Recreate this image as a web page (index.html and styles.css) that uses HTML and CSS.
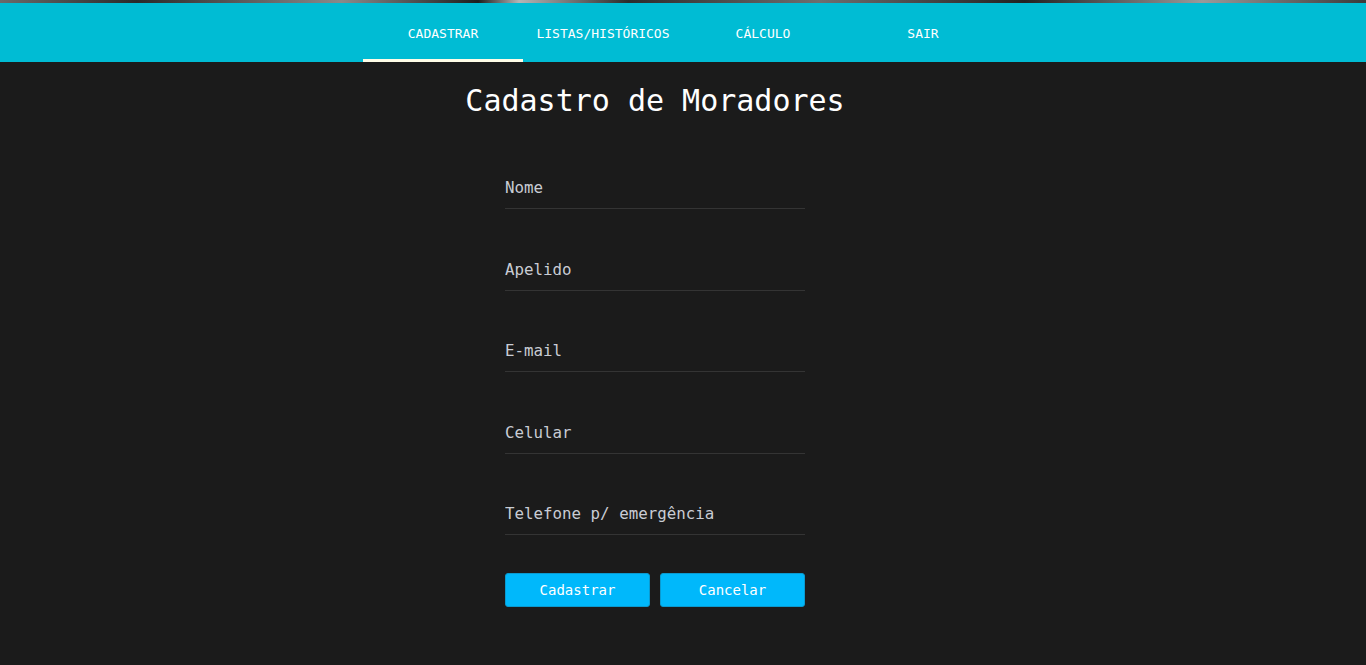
FILE: index.html
```html
<!DOCTYPE html>
<html lang="pt-BR">
<head>
<meta charset="utf-8">
<title>Cadastro de Moradores</title>
<link rel="stylesheet" href="styles.css">
</head>
<body>
<header class="topbar">
  <div class="strip"></div>
  <nav class="tabs">
    <a class="tab active" href="#">CADASTRAR</a>
    <a class="tab" href="#">LISTAS/HISTÓRICOS</a>
    <a class="tab" href="#">CÁLCULO</a>
    <a class="tab" href="#">SAIR</a>
  </nav>
</header>
<main class="content">
  <h1 class="title">Cadastro de Moradores</h1>
  <form class="form">
    <input class="field" type="text" placeholder="Nome">
    <input class="field" type="text" placeholder="Apelido">
    <input class="field" type="email" placeholder="E-mail">
    <input class="field" type="text" placeholder="Celular">
    <input class="field" type="text" placeholder="Telefone p/ emergência">
    <div class="actions">
      <button class="btn" type="button">Cadastrar</button>
      <button class="btn" type="button">Cancelar</button>
    </div>
  </form>
</main>
</body>
</html>
```

FILE: styles.css
```css
html, body {
  margin: 0;
  padding: 0;
  background: #1b1b1b;
  height: 100%;
}
body {
  font-family: "DejaVu Sans Mono", "Liberation Mono", monospace;
  color: #fff;
}
.strip {
  height: 3px;
  background: linear-gradient(90deg, #6a6a6a 0%, #2a2a2a 10%, #8a8a8a 25%, #1e1e1e 35%, #b5b5b5 38%, #2c2c2c 46%, #6e6e6e 60%, #222 75%, #9a9a9a 88%, #3a3a3a 100%);
}
.tabs {
  height: 59px;
  background: #00bcd4;
  display: flex;
  justify-content: center;
}
.tab {
  width: 160px;
  display: flex;
  align-items: center;
  justify-content: center;
  color: #fff;
  text-decoration: none;
  font-size: 13px;
  font-weight: 500;
  box-sizing: border-box;
  padding-top: 4px;
  border-bottom: 3px solid transparent;
}
.tab.active {
  border-bottom-color: #fffde7;
}
.content {
  display: flex;
  flex-direction: column;
  align-items: center;
  padding-top: 21px;
  padding-right: 56px;
}
.title {
  margin: 0;
  font-size: 30px;
  line-height: 36px;
  font-weight: 400;
  color: #fff;
}
.form {
  width: 300px;
  margin-top: 49px;
  display: flex;
  flex-direction: column;
  gap: 40.5px;
}
.field {
  display: block;
  width: 100%;
  height: 41px;
  box-sizing: border-box;
  background: transparent;
  border: none;
  border-bottom: 1px solid #343434;
  padding: 0 0 1px 0;
  margin: 0;
  font-family: inherit;
  font-size: 15.8px;
  color: #e0e0e0;
  outline: none;
}
.field::placeholder {
  color: #c9ccd4;
  opacity: 1;
}
.actions {
  display: flex;
  gap: 10px;
  margin-top: -2.5px;
}
.btn {
  flex: 1;
  height: 34px;
  box-sizing: border-box;
  background: #00b8fb;
  border: 1px solid #0a9ad0;
  border-radius: 3px;
  color: #fff;
  font-family: inherit;
  font-size: 14px;
  font-weight: 500;
  cursor: pointer;
  padding: 0;
}
```
